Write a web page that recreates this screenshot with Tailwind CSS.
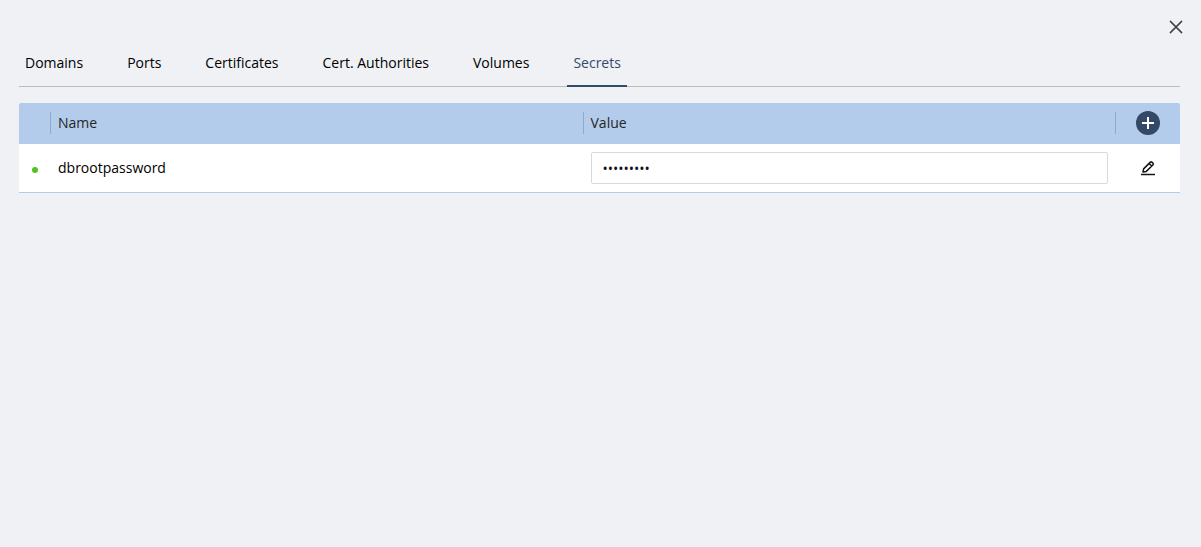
<!DOCTYPE html>
<html lang="en">
<head>
<meta charset="utf-8">
<meta name="viewport" content="width=device-width, initial-scale=1">
<title>Secrets</title>
<script src="https://cdn.jsdelivr.net/npm/@tailwindcss/browser@4"></script>
</head>
<body class="min-h-screen bg-[#eff1f5] font-['Open_Sans','Noto_Sans',sans-serif] text-sm leading-[22px] text-black">
<main class="flex flex-col pt-4 pr-[21px] pl-[19px]">
  <div class="-mr-[7px] flex justify-end">
    <button type="button" aria-label="Close" class="flex size-[22px] items-center justify-center text-[#404045]">
      <svg class="size-4" viewBox="0 0 16 16" fill="none" stroke="currentColor" stroke-width="1.5" stroke-linecap="round"><path d="M2.4 2.4 13.6 13.6M13.6 2.4 2.4 13.6"/></svg>
    </button>
  </div>
  <nav class="mt-0.5 flex h-[47px] gap-8 border-b border-[#bbbcbf]" aria-label="Resources">
    <a href="#domains" class="px-1.5 pt-3">Domains</a>
    <a href="#ports" class="px-1.5 pt-3">Ports</a>
    <a href="#certificates" class="px-1.5 pt-3">Certificates</a>
    <a href="#authorities" class="px-1.5 pt-3">Cert. Authorities</a>
    <a href="#volumes" class="px-1.5 pt-3">Volumes</a>
    <a href="#secrets" aria-current="page" class="-mb-px border-b-2 border-[#334a6b] px-1.5 pt-3 text-[#334a6b]">Secrets</a>
  </nav>
  <table class="mt-4 w-full table-fixed border-separate border-spacing-0">
    <colgroup><col class="w-8"><col><col><col class="w-16"></colgroup>
    <thead>
      <tr class="h-[41px] text-left text-[#262626]">
        <th class="rounded-tl-xs bg-[#b4cceb] p-0 pb-px"><div class="h-[22px] border-r border-[#90a9c9]"></div></th>
        <th class="bg-[#b4cceb] p-0 pb-px font-normal"><div class="h-[22px] border-r border-[#90a9c9] pl-[7px]">Name</div></th>
        <th class="bg-[#b4cceb] p-0 pb-px font-normal"><div class="h-[22px] border-r border-[#90a9c9] pl-[7px]">Value</div></th>
        <th class="rounded-tr-xs bg-[#b4cceb] p-0 pb-px">
          <button type="button" aria-label="Add secret" class="mx-auto flex size-6 items-center justify-center rounded-full bg-[#334966] text-white">
            <svg class="size-6" viewBox="0 0 24 24" fill="none" stroke="currentColor" stroke-width="2"><path d="M6 12H18M12 6V18"/></svg>
          </button>
        </th>
      </tr>
    </thead>
    <tbody>
      <tr class="h-[49px]">
        <td class="border-b border-[#b4cceb] bg-white p-0 pt-1"><div class="mx-auto size-1.5 rounded-full bg-[#52c41a]"></div></td>
        <td class="border-b border-[#b4cceb] bg-white py-0 pr-2 pl-[7px]"><label for="secret">dbrootpassword</label></td>
        <td class="border-b border-[#b4cceb] bg-white py-0 pr-2 pl-[7px]"><input id="secret" type="password" value="123456789" readonly class="block h-8 w-full rounded-xs border border-[#d9d9d9] bg-white px-[11px] leading-[22px] text-[#0c1420]"></td>
        <td class="border-b border-[#b4cceb] bg-white p-0">
          <button type="button" aria-label="Edit dbrootpassword" class="mx-auto flex size-4 items-center justify-center text-[#141414]">
            <svg class="size-4" viewBox="0 0 16 16" fill="none" stroke="currentColor" stroke-width="1.5" stroke-linejoin="round"><path d="M1 14.5H15"/><path d="M3 12 3.6 8.9 10.4 2.1Q11.1 1.5 11.8 2.1L13.1 3.4Q13.7 4.1 13.1 4.8L6.3 11.4ZM9.1 3.5 11.7 6"/></svg>
          </button>
        </td>
      </tr>
    </tbody>
  </table>
</main>
</body>
</html>
